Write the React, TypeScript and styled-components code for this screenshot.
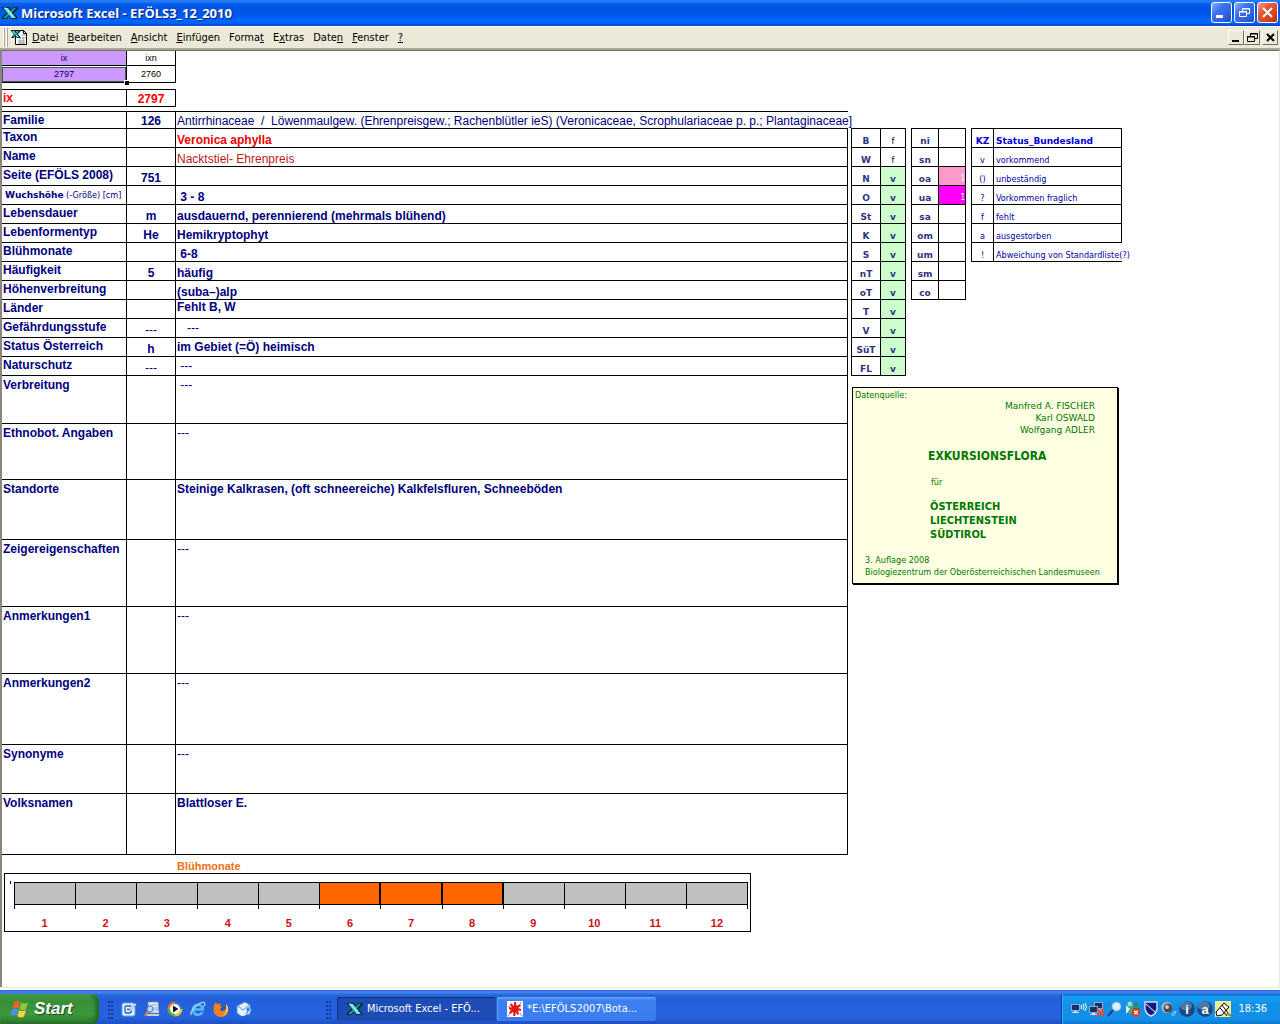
import React from "react";
import styled, { createGlobalStyle, css } from "styled-components";

const tahoma = `Tahoma, "DejaVu Sans Condensed", "DejaVu Sans", sans-serif`;
const arial = `"Liberation Sans", Arial, sans-serif`;

const Global = createGlobalStyle`
  *, *::before, *::after { box-sizing: border-box; }
  body { margin: 0; background: #fff; font-family: ${arial}; }
  button { font: inherit; color: inherit; border: 0; margin: 0; padding: 0; background: none; }
  svg { display: block; flex: none; }
`;

const Desktop = styled.div`
  min-height: 100vh;
  display: flex;
  flex-direction: column;
`;

/* ---------- title bar ---------- */

const TitleBar = styled.header`
  height: 26px;
  display: flex;
  align-items: center;
  padding: 0 2px 1px 2px;
  background: linear-gradient(#1c6cf0 0, #2f87ff 1px, #0d62ee 3px, #0054e3 7px, #0058ee 15px, #0066ff 20px, #0063fa 23px, #0045c8 26px);
`;

const Title = styled.h1`
  flex: 1;
  margin: 0 0 0 3px;
  font: bold 13px/18px "Noto Sans", "Open Sans", sans-serif;
  color: #fff;
  text-shadow: 1px 1px 1px #0a1f83;
  white-space: nowrap;
`;

const CaptionButtons = styled.div`
  display: flex;
  gap: 2px;
`;

const CaptionButton = styled.button<{ $danger?: boolean }>`
  width: 21px;
  height: 21px;
  display: grid;
  place-items: center;
  border: 1px solid #fff;
  border-radius: 3px;
  background: ${(p) =>
    p.$danger
      ? "linear-gradient(135deg, #f0a088 0, #e2593a 35%, #d5401c 75%, #b32c0e)"
      : "linear-gradient(135deg, #8fb0fa 0, #3f72ee 35%, #2a5fe0 75%, #1746c0)"};
`;

/* ---------- menu bar ---------- */

const MenuBar = styled.nav`
  height: 24px;
  display: flex;
  align-items: center;
  padding: 0 2px 0 3px;
  background: #ece9d8;
  border-top: 1px solid #fff;
  border-bottom: 2px solid #aca899;
`;

const MenuGrip = styled.span`
  width: 6px;
  height: 19px;
  margin-right: 2px;
  background: linear-gradient(90deg, #fff 1px, #aca899 1px, #aca899 2px, #ece9d8 2px, #ece9d8 3px, #fff 3px, #fff 4px, #aca899 4px, #aca899 5px, #ece9d8 5px);
`;

const MenuItems = styled.div`
  flex: 1;
  display: flex;
`;

const MenuItem = styled.button`
  padding: 0 5px 0 4px;
  font: 11px/16px ${tahoma};
  color: #000;
  white-space: nowrap;
`;

const DocButtons = styled.div`
  display: flex;
`;

const DocButton = styled.button<{ $apart?: boolean }>`
  width: 16px;
  height: 15px;
  margin-left: ${(p) => (p.$apart ? 2 : 0)}px;
  display: grid;
  place-items: center;
  background: #ece9d8;
  border: 1px solid;
  border-color: #fff #716f64 #716f64 #fff;
`;

/* ---------- worksheet ---------- */

const Sheet = styled.main`
  flex: 1;
  padding-bottom: 54px;
  border: solid #8a887c;
  border-width: 1px 1px 0 2px;
  border-top-color: #716f64;
  border-right-color: #ece9d8;
  background: #fff;
`;

const SheetTable = styled.table`
  border-collapse: separate;
  border-spacing: 0;
  table-layout: fixed;
`;

const KeyTable = styled(SheetTable)`
  width: 174px;
`;

const IndexTable = styled(SheetTable)`
  width: 174px;
  margin: 6px 0 4px;
  border-top: 1px solid #000;
`;

const keyCell = css`
  padding: 0;
  border: solid #000;
  border-width: 0 1px 1px 0;
  font: 9px/14px ${arial};
  text-align: center;
  color: #000;
`;

const KeyHead = styled.th<{ $lilac?: boolean }>`
  ${keyCell}
  height: 15px;
  ${(p) => p.$lilac && "background: #cc99ff; color: #000080;"}
`;

const KeyCell = styled.td<{ $active?: boolean }>`
  ${keyCell}
  height: 17px;
  ${(p) =>
    p.$active &&
    `position: relative;
     background: #cc99ff;
     color: #000080;
     box-shadow: inset 0 1px 0 #fff, inset 0 2px 0 #46584a, inset 0 0 0 1px #46584a;`}
`;

const FillHandle = styled.span`
  position: absolute;
  right: -3px;
  bottom: -3px;
  width: 5px;
  height: 5px;
  background: #000;
  border: 1px solid #fff;
  border-width: 1px 0 0 1px;
`;

const Columns = styled.div`
  display: flex;
  align-items: flex-start;
  gap: 3px;
`;

const RecordTable = styled(SheetTable)`
  flex: 0 0 auto;
  width: 846px;
  border-top: 1px solid #000;
`;

type Align = "top" | "middle" | "bottom";

const recordCell = css`
  padding: 0 1px;
  border: solid #000;
  border-width: 0 1px 1px 0;
  font: bold 12px/14px ${arial};
  color: #000080;
  white-space: pre;
`;

const RecordRow = styled.tr<{ $height: number }>`
  height: ${(p) => p.$height}px;
`;

const Label = styled.th<{ $red?: boolean; $roomy?: boolean }>`
  ${recordCell}
  padding-top: ${(p) => (p.$roomy ? 2 : 1)}px;
  text-align: left;
  vertical-align: top;
  ${(p) => p.$red && "color: #f00;"}
`;

const Code = styled.td<{ $red?: boolean; $light?: boolean }>`
  ${recordCell}
  text-align: center;
  vertical-align: bottom;
  ${(p) => p.$light && "font-weight: normal;"}
  ${(p) => p.$red && "color: #f00;"}
`;

const Value = styled.td<{ $align?: Align; $roomy?: boolean; $color?: string; $light?: boolean; $spill?: boolean }>`
  ${recordCell}
  padding-top: ${(p) => (p.$roomy ? 2 : 0)}px;
  vertical-align: ${(p) => p.$align ?? "bottom"};
  ${(p) => p.$color && `color: ${p.$color};`}
  ${(p) => p.$light && "font-weight: normal;"}
  ${(p) => p.$spill && "border-right: 0;"}
`;

const Heavy = styled.span`
  padding-left: 2px;
  font: bold 9px/14px "DejaVu Sans", sans-serif;
`;

const Slim = styled.span`
  font: 9px/14px "DejaVu Sans Condensed", sans-serif;
`;

/* ---------- side tables ---------- */

const Side = styled.aside`
  padding-top: 17px;
`;

const SideTables = styled.div`
  display: flex;
  align-items: flex-start;
  gap: 5px;
`;

const SideTable = styled(SheetTable)<{ $width: number }>`
  width: ${(p) => p.$width}px;
  border-top: 1px solid #000;
  border-left: 1px solid #000;
`;

const sideCell = css`
  height: 19px;
  padding: 0 2px;
  border: solid #000;
  border-width: 0 1px 1px 0;
  vertical-align: bottom;
  font: 9px/12px "DejaVu Sans Condensed", sans-serif;
  white-space: nowrap;
`;

const sideBold = `font: bold 9px/12px "DejaVu Sans", sans-serif;`;

const Region = styled.th`
  ${sideCell}
  ${sideBold}
  color: #333380;
`;

const Mark = styled.td<{ $present?: boolean; $fill?: string }>`
  ${sideCell}
  text-align: center;
  color: #000;
  ${(p) => p.$present && `${sideBold} background: #ccffcc; color: #333380;`}
  ${(p) => p.$fill && `background: ${p.$fill}; color: #fff; text-align: right; padding-right: 0; font-size: 8px;`}
`;

const StatusHead = styled.th<{ $left?: boolean }>`
  ${sideCell}
  ${sideBold}
  color: #0000d8;
  text-align: ${(p) => (p.$left ? "left" : "center")};
`;

const StatusCell = styled.td<{ $center?: boolean; $spill?: boolean }>`
  ${sideCell}
  color: #0000a8;
  text-align: ${(p) => (p.$center ? "center" : "left")};
  ${(p) => p.$spill && "border-right: 0;"}
`;

/* ---------- source note ---------- */

const Note = styled.section`
  width: 266px;
  margin: 11px 0 0 1px;
  padding: 1px 3px 5px 2px;
  border: 1px solid #000;
  background: #ffffe1;
  box-shadow: 1px 1px 0 #000;
  font: 9px/12px "DejaVu Sans Condensed", sans-serif;
  color: #007800;
  white-space: nowrap;
`;

const NoteLine = styled.p`
  margin: 0;
`;

const Authors = styled(NoteLine)`
  margin-top: -1px;
  padding-right: 19px;
  font-family: "DejaVu Sans", sans-serif;
  text-align: right;
`;

const Work = styled.h2`
  margin: 13px 0 13px 73px;
  font: bold 12px/14px ${tahoma};
`;

const For = styled(NoteLine)`
  padding-left: 76px;
`;

const Places = styled.p`
  margin: 12px 0 12px 75px;
  font: bold 11px/14px ${tahoma};
`;

const Imprint = styled(NoteLine)`
  padding-left: 10px;
`;

/* ---------- flowering months ---------- */

const ChartTitle = styled.h2`
  margin: 0;
  padding: 4px 0 0 175px;
  height: 18px;
  font: bold 11px/14px ${arial};
  color: #f07010;
`;

const Chart = styled.section`
  position: relative;
  width: 747px;
  margin-left: 2px;
  padding: 8px 2px 0 9px;
  border: 1px solid #000;

  &::before {
    content: "";
    position: absolute;
    left: 5px;
    top: 7px;
    width: 1px;
    height: 3px;
    background: #000;
  }
`;

const Months = styled.ol`
  display: grid;
  grid-template-columns: repeat(12, 1fr);
  margin: 0;
  padding: 0 1px 0 0;
  list-style: none;
  height: 49px;
`;

const Bar = styled.span<{ $bloom: boolean }>`
  height: 23px;
  border: 1px solid #000;
  border-right-width: ${(p) => (p.$bloom ? 1 : 0)}px;
  background: ${(p) => (p.$bloom ? "#ff6600" : "#c0c0c0")};
`;

const Tick = styled.span`
  height: 4px;
  margin-bottom: 7px;
  border: solid #000;
  border-width: 0 0 0 1px;
`;

const Month = styled.li`
  display: flex;
  flex-direction: column;
  font: bold 11px/14px ${arial};
  color: #d01018;
  text-align: center;

  &:last-child {
    margin-right: -1px;
  }

  &:last-child ${Bar}, &:last-child ${Tick} {
    border-right-width: 1px;
  }
`;

/* ---------- taskbar ---------- */

const Taskbar = styled.footer`
  height: 37px;
  display: flex;
  align-items: stretch;
  padding-top: 7px;
  background: linear-gradient(#ece9d8 0, #ece9d8 1px, #fff 1px, #fff 3px, #2c68d4 3px, #3d8af0 5px, #2a66dc 8px, #245edb 12px, #2663e0 30px, #1d4fc0 37px);
`;

const StartButton = styled.button`
  width: 99px;
  display: flex;
  align-items: center;
  gap: 4px;
  padding-left: 10px;
  border-radius: 0 8px 8px 0;
  background: linear-gradient(#5aa85a 0, #3f9a3f 3px, #388e38 8px, #3c983c 20px, #2c7a2c 30px);
  box-shadow: inset -3px 0 4px #1e651e, inset 0 1px 1px #7cc47c;
  font: italic bold 17px/24px ${arial};
  color: #fff;
  text-shadow: 1px 1px 1px #1a4a1a;
`;

const Grip = styled.span`
  width: 5px;
  margin: 7px 6px 5px 9px;
  background: radial-gradient(circle at 1px 1px, #123c9c 1px, transparent 1px) 0 0 / 3px 4px;
`;

const QuickLaunch = styled.div`
  width: 198px;
  display: flex;
  align-items: center;
  gap: 7px;
  padding-left: 2px;
`;

const IconButton = styled.button`
  width: 16px;
  height: 16px;
`;

const Tasks = styled.div`
  flex: 1;
  display: flex;
  gap: 1px;
  padding: 3px 0;
`;

const Task = styled.button<{ $active?: boolean }>`
  width: 159px;
  display: flex;
  align-items: center;
  gap: 4px;
  padding: 0 10px;
  border-radius: 2px;
  background: ${(p) => (p.$active ? "#1c4cb4" : "linear-gradient(#5a98fa, #3c80f2 4px, #3a7cf0)")};
  box-shadow: inset 1px 1px 1px ${(p) => (p.$active ? "#10307c" : "#6aa4fc")};
  font: 11px/16px ${tahoma};
  color: #fff;
  white-space: nowrap;
`;

const Tray = styled.div`
  display: flex;
  align-items: center;
  gap: 2px;
  padding: 0 13px 0 9px;
  border-left: 1px solid #0a3a9c;
  background: linear-gradient(#0c68c8 0, #18a0f4 3px, #1290e8 10px, #1290e8 25px, #0c78d0 30px);
  box-shadow: inset 1px 0 0 #30b4f8;
  font: 11px/16px ${tahoma};
  color: #fff;
`;

const Clock = styled.time`
  margin-left: 5px;
`;

/* ---------- icons ---------- */

const ExcelX = () => (
  <svg width="16" height="14" viewBox="0 0 16 14" aria-hidden="true">
    <path d="M0 1h7l2.500 3L12 1h4v2l-4.500 4 4 4.500V13H9L7 10l-2.500 3H0v-2l5-4.500L0 2z" fill="#002c30" />
    <path d="M9.500 6.500 14 2h-2L1 12h3z" fill="#28a8a0" />
    <path d="M1.500 2h4.500l8 10H9.500z" fill="#58dcd4" />
    <path d="M2 2h2l8 10" fill="none" stroke="#d8fffc" strokeWidth=".8" />
  </svg>
);

const WorkbookIcon = () => (
  <svg width="17" height="17" viewBox="0 0 17 17" aria-hidden="true">
    <path d="M4.500 1.500h8l3 3v11h-11z" fill="#fff" stroke="#000" />
    <path d="M12.500 1.500v3h3" fill="none" stroke="#000" />
    <path d="M7 12h7M7 14h7M9 8v7M12 8v7M11 6h4M11 9h4" stroke="#9a9a9a" />
    <path d="M0 1h4l1.500 2L7 1h3v1L7 5l3 4H6L4.500 7 3 9H0l3-4-3-3z" fill="#002c30" />
    <path d="M1 2h2l5 6H6z" fill="#5fe0d8" />
    <path d="M8 2 2 8" stroke="#1c9c94" strokeWidth="1.300" />
  </svg>
);

const MinimizeGlyph = ({ color }: { color: string }) => (
  <svg width="13" height="13" viewBox="0 0 13 13" aria-hidden="true">
    <path d={color === "#fff" ? "M1 10.500h7" : "M2 10h7"} stroke={color} strokeWidth={color === "#fff" ? 3 : 2} />
  </svg>
);

const RestoreGlyph = ({ color }: { color: string }) => (
  <svg width="13" height="13" viewBox="0 0 13 13" fill="none" stroke={color} aria-hidden="true">
    <path d="M4.500 5V2.500h7v5H9M4 3h8" />
    <path d="M1.500 5.500h7v5h-7zM1 6h8" />
  </svg>
);

const CloseGlyph = ({ color }: { color: string }) => (
  <svg width="13" height="13" viewBox="0 0 13 13" aria-hidden="true">
    <path d={color === "#fff" ? "M2 2l9 9M11 2l-9 9" : "M3 3l7 7M10 3l-7 7"} stroke={color} strokeWidth="2" />
  </svg>
);

const WindowsFlag = () => (
  <svg width="20" height="18" viewBox="0 0 20 18" aria-hidden="true">
    <path d="M4 2q3-2 6 0L8.500 8.500q-3-2-6 0z" fill="#f0622c" />
    <path d="M11 2.500q3 2 7 0L16 9q-3 2-6.500 0z" fill="#8cc83c" />
    <path d="M2 9.500q3-2 6 0L6.500 16q-3-2-6 0z" fill="#4a90f0" />
    <path d="M9 10q3 2 7 0l-2 6.500q-3 2-6.500 0z" fill="#fcd040" />
  </svg>
);

const Icon = ({ children }: { children: React.ReactNode }) => (
  <svg width="16" height="16" viewBox="0 0 16 16" aria-hidden="true">
    {children}
  </svg>
);

const ShowDesktopIcon = () => (
  <Icon>
    <rect x="1" y="2" width="13" height="13" rx="2" fill="#e8f4ff" stroke="#5ca4ec" />
    <path d="M10 5H5L4 6v5l1 1h4l2-2M6 8.500h4" stroke="#1c60c0" strokeWidth="1.300" fill="none" />
    <path d="m8 9 6-7 1.500 1.500L9.500 10z" fill="#fff" stroke="#3a6cb8" strokeWidth=".7" />
  </Icon>
);

const SearchPageIcon = () => (
  <Icon>
    <path d="M4 1h10l1 11H5z" fill="#e8f0fc" stroke="#8090b8" strokeWidth=".8" />
    <path d="M6 4h7M8 7h6M8 9h6" stroke="#8aa0d0" />
    <path d="M3 13h12v2H3z" fill="#c8d0e0" />
    <circle cx="6" cy="8" r="3" fill="#b8dcf8" stroke="#6078a8" />
    <path d="m4 10-3 5" stroke="#d88848" strokeWidth="2" />
  </Icon>
);

const MediaIcon = () => (
  <Icon>
    <circle cx="8" cy="8" r="7.500" fill="#2c70d8" />
    <path d="M8 .5A7.500 7.500 0 0 0 .5 8H8z" fill="#f07828" />
    <path d="M.5 8A7.500 7.500 0 0 0 8 15.500V8z" fill="#58b038" />
    <path d="M8 15.500A7.500 7.500 0 0 0 15.500 8H8z" fill="#f0c030" />
    <circle cx="8" cy="8" r="5" fill="#fff" />
    <path d="M6 4.500v7l5.500-3.500z" fill="#101820" />
  </Icon>
);

const BrowserIcon = () => (
  <Icon>
    <path d="M12.500 11A5 5 0 1 1 13 8.500H4" fill="none" stroke="#58b8f8" strokeWidth="2.600" />
    <path d="M1 14Q0 11 5 6t9-4.500q2 1-.5 4" fill="none" stroke="#a8dcfc" strokeWidth="1.200" />
  </Icon>
);

const FirefoxIcon = () => (
  <Icon>
    <circle cx="8.500" cy="7" r="6" fill="#2c5cb8" />
    <path d="M1 4q1-2 2-3 0 2 2 2 2-1 4 0-2 0-2 2l2 1q-2 1-2 3 2 2 5 0 2-2 1-5 3 3 2 7-2 5-7 5Q1 15 .5 9 .5 6 1 4z" fill="#f08020" />
    <path d="M13 3q3 3 2 7-2 4-6 5 4-3 4-6z" fill="#fcc840" />
  </Icon>
);

const MailIcon = () => (
  <Icon>
    <path d="m1 5 8-4 5 3v9l-9 2-4-3z" fill="#e4f2ff" stroke="#4890e0" strokeWidth=".8" />
    <path d="m2 5 5 4 6-5" fill="none" stroke="#4890e0" />
    <path d="M5 14.500q5 0 6-5l-2-.5 3.500-4L15 10l-2-.2q-1 5-8 4.700z" fill="#2c88e8" stroke="#fff" strokeWidth=".6" />
  </Icon>
);

const SplatIcon = () => (
  <Icon>
    <path d="M0 0h16v16H0z" fill="#fff" />
    <path d="M7 1h2l.5 4L13 3l1 2-3 2 3 1v2l-3-.5 1 3.500-2 1-1-3-1 4H6l.5-4L3 13l-1-1 2-3-2-1V6l3 .5L3 4l1-2 3 3z" fill="#e01818" />
    <path d="m1 15 2-3M13 12l2 3M1 5l2 1M13 1l1 2" stroke="#e07070" />
  </Icon>
);

const Monitor = ({ x, y }: { x: number; y: number }) => (
  <g transform={`translate(${x} ${y})`}>
    <path d="M0 0h9v7H0z" fill="#98a8c8" />
    <path d="M1 1h7v5H1z" fill="#16306c" />
    <path d="M1 9h7v-1H6V7H3v1H1z" fill="#d8dce4" />
  </g>
);

const WirelessIcon = () => (
  <Icon>
    <Monitor x={0} y={3} />
    <path d="M10 4q1 2 0 4M12 3q2 3 0 6M14 2q3 4 0 8" stroke="#fff" fill="none" />
  </Icon>
);

const OfflineIcon = () => (
  <Icon>
    <Monitor x={5} y={1} />
    <Monitor x={0} y={5} />
    <path d="m8 8 7 7M15 8l-7 7" stroke="#f04c38" strokeWidth="2.200" />
  </Icon>
);

const MagnifierIcon = () => (
  <Icon>
    <path d="m6 9-5 6" stroke="#203c90" strokeWidth="2" />
    <circle cx="9.500" cy="5.500" r="4.500" fill="#d8f0ff" stroke="#80b0e8" />
  </Icon>
);

const MessengerIcon = () => (
  <Icon>
    <circle cx="5" cy="3" r="2.500" fill="#90dcd8" />
    <circle cx="11" cy="4" r="2.500" fill="#2c8c60" />
    <path d="m1 12 3-7h4l2 8z" fill="#48a870" />
    <path d="M8 7h6l1 4-6 2z" fill="#1c7458" />
    <path d="m1 4 4 4-4 5z" fill="#e0f4f4" />
    <circle cx="11" cy="11.500" r="4.200" fill="#e03c20" />
    <path d="m9.300 9.800 3.400 3.400M12.700 9.800l-3.400 3.400" stroke="#fff" strokeWidth="1.300" />
  </Icon>
);

const ShieldIcon = () => (
  <Icon>
    <path d="M2 1h12v7q-1 5-6 7-5-2-6-7z" fill="#101c80" stroke="#d8dce8" strokeWidth="1.400" />
    <path d="m3 3 9 8" stroke="#fff" />
  </Icon>
);

const SpeakerIcon = () => (
  <Icon>
    <circle cx="6" cy="6.500" r="5.500" fill="#b8bcc4" />
    <circle cx="7" cy="7" r="4.500" fill="#484c54" />
    <circle cx="6" cy="6" r="2" fill="#c8ccd0" />
    <path d="M10 14q3-1 3-4M12 15q3-2 3-5" stroke="#a8d8ff" fill="none" />
  </Icon>
);

const Badge = ({ letter }: { letter: string }) => (
  <Icon>
    <circle cx="8" cy="8" r="7.800" fill="#1c4880" />
    <ellipse cx="7" cy="5" rx="6" ry="4.500" fill="#7098c0" opacity=".6" />
    <text x="8" y="12.500" textAnchor="middle" fontSize="13" fontWeight="bold" fontFamily="Liberation Sans, sans-serif" fill="#fff">
      {letter}
    </text>
  </Icon>
);

const PenIcon = () => (
  <Icon>
    <path d="M0 0h16v16H0z" fill="#f0ec98" />
    <path d="m1 11 8-9 5 4-7 8-5 1z" fill="#fff" stroke="#000" />
    <path d="m7 4 6 8M5 7l7 8" stroke="#000" />
    <path d="m12 12 4 3" stroke="#908020" strokeWidth="2" />
  </Icon>
);

/* ---------- data ---------- */

const menu: [string, string, string][] = [
  ["", "D", "atei"],
  ["", "B", "earbeiten"],
  ["", "A", "nsicht"],
  ["", "E", "infügen"],
  ["Forma", "t", ""],
  ["E", "x", "tras"],
  ["Date", "n", ""],
  ["", "F", "enster"],
  ["", "?", ""],
];

type Row = {
  label: React.ReactNode;
  code?: string;
  value?: string;
  align?: Align;
  height?: number;
  color?: string;
  light?: boolean;
  spill?: boolean;
};

const rows: Row[] = [
  {
    label: "Familie",
    code: "126",
    value: "Antirrhinaceae  /  Löwenmaulgew. (Ehrenpreisgew.; Rachenblütler ieS) (Veronicaceae, Scrophulariaceae p. p.; Plantaginaceae]",
    height: 17,
    light: true,
    spill: true,
  },
  { label: "Taxon", value: "Veronica aphylla", color: "#f00000" },
  { label: "Name", value: "Nacktstiel- Ehrenpreis", color: "#b81c1c", light: true },
  { label: "Seite (EFÖLS 2008)", code: "751" },
  {
    label: (
      <>
        <Heavy>Wuchshöhe</Heavy>
        <Slim> (-Größe) [cm]</Slim>
      </>
    ),
    value: " 3 - 8",
  },
  { label: "Lebensdauer", code: "m", value: "ausdauernd, perennierend (mehrmals blühend)" },
  { label: "Lebenformentyp", code: "He", value: "Hemikryptophyt" },
  { label: "Blühmonate", value: " 6-8" },
  { label: "Häufigkeit", code: "5", value: "häufig" },
  { label: "Höhenverbreitung", value: "(suba–)alp" },
  { label: "Länder", value: "Fehlt B, W", align: "top" },
  { label: "Gefährdungsstufe", code: "---", value: "   ---", align: "middle" },
  { label: "Status Österreich", code: "h", value: "im Gebiet (=Ö) heimisch", align: "middle" },
  { label: "Naturschutz", code: "---", value: " ---", align: "middle" },
  { label: "Verbreitung", value: " ---", height: 48 },
  { label: "Ethnobot. Angaben", value: "---", height: 56 },
  { label: "Standorte", value: "Steinige Kalkrasen, (oft schneereiche) Kalkfelsfluren, Schneeböden", height: 60 },
  { label: "Zeigereigenschaften", value: "---", height: 67 },
  { label: "Anmerkungen1", value: "---", height: 67 },
  { label: "Anmerkungen2", value: "---", height: 71 },
  { label: "Synonyme", value: "---", height: 49 },
  { label: "Volksnamen", value: "Blattloser E.", height: 61 },
];

const isEmpty = (text?: string) => text?.trim() === "---";

const regions = ["B", "W", "N", "O", "St", "K", "S", "nT", "oT", "T", "V", "SüT", "FL"];
const absent = ["B", "W"];

const zones: [string, string?][] = [
  ["ni"], ["sn"], ["oa", "#ff99cc"], ["ua", "#ff00ff"], ["sa"], ["om"], ["um"], ["sm"], ["co"],
];

const statuses = [
  ["v", "vorkommend"],
  ["()", "unbeständig"],
  ["?", "Vorkommen fraglich"],
  ["f", "fehlt"],
  ["a", "ausgestorben"],
  ["!", "Abweichung von Standardliste(?)"],
];

const months = Array.from({ length: 12 }, (_, i) => i + 1);

const launchers: [string, () => React.JSX.Element][] = [
  ["Desktop anzeigen", ShowDesktopIcon],
  ["Suchen", SearchPageIcon],
  ["Media Player", MediaIcon],
  ["Internet Explorer", BrowserIcon],
  ["Firefox", FirefoxIcon],
  ["E-Mail", MailIcon],
];

export default function App() {
  return (
    <Desktop>
      <Global />
      <TitleBar>
        <ExcelX />
        <Title>Microsoft Excel - EFÖLS3_12_2010</Title>
        <CaptionButtons>
          <CaptionButton aria-label="Minimieren"><MinimizeGlyph color="#fff" /></CaptionButton>
          <CaptionButton aria-label="Wiederherstellen"><RestoreGlyph color="#fff" /></CaptionButton>
          <CaptionButton $danger aria-label="Schließen"><CloseGlyph color="#fff" /></CaptionButton>
        </CaptionButtons>
      </TitleBar>
      <MenuBar>
        <MenuGrip />
        <WorkbookIcon />
        <MenuItems>
          {menu.map(([before, key, after]) => (
            <MenuItem key={before + key + after}>{before}<u>{key}</u>{after}</MenuItem>
          ))}
        </MenuItems>
        <DocButtons>
          <DocButton aria-label="Mappe minimieren"><MinimizeGlyph color="#000" /></DocButton>
          <DocButton aria-label="Mappe wiederherstellen"><RestoreGlyph color="#000" /></DocButton>
          <DocButton $apart aria-label="Mappe schließen"><CloseGlyph color="#000" /></DocButton>
        </DocButtons>
      </MenuBar>

      <Sheet>
        <KeyTable>
          <colgroup><col width={125} /><col width={49} /></colgroup>
          <tbody>
            <tr><KeyHead $lilac>ix</KeyHead><KeyHead>ixn</KeyHead></tr>
            <tr><KeyCell $active>2797<FillHandle /></KeyCell><KeyCell>2760</KeyCell></tr>
          </tbody>
        </KeyTable>
        <IndexTable>
          <colgroup><col width={125} /><col width={49} /></colgroup>
          <tbody>
            <RecordRow $height={17}><Label $red scope="row">ix</Label><Code $red>2797</Code></RecordRow>
          </tbody>
        </IndexTable>

        <Columns>
          <RecordTable>
            <colgroup><col width={125} /><col width={49} /><col /></colgroup>
            <tbody>
              {rows.map((r, i) => {
                const tall = (r.height ?? 19) > 19;
                return (
                  <RecordRow key={i} $height={r.height ?? 19}>
                    <Label scope="row" $roomy={tall}>{r.label}</Label>
                    <Code $light={isEmpty(r.code)}>{r.code}</Code>
                    <Value
                      $align={tall ? "top" : r.align}
                      $roomy={tall}
                      $color={r.color}
                      $light={r.light || isEmpty(r.value)}
                      $spill={r.spill}
                    >
                      {r.value}
                    </Value>
                  </RecordRow>
                );
              })}
            </tbody>
          </RecordTable>

          <Side>
            <SideTables>
              <SideTable $width={55}>
                <colgroup><col width={29} /><col width={25} /></colgroup>
                <tbody>
                  {regions.map((r) => (
                    <tr key={r}>
                      <Region scope="row">{r}</Region>
                      <Mark $present={!absent.includes(r)}>{absent.includes(r) ? "f" : "v"}</Mark>
                    </tr>
                  ))}
                </tbody>
              </SideTable>
              <SideTable $width={55}>
                <colgroup><col width={27} /><col width={27} /></colgroup>
                <tbody>
                  {zones.map(([zone, fill]) => (
                    <tr key={zone}>
                      <Region scope="row">{zone}</Region>
                      <Mark $fill={fill}>{fill ? "1" : ""}</Mark>
                    </tr>
                  ))}
                </tbody>
              </SideTable>
              <SideTable $width={151}>
                <colgroup><col width={22} /><col width={128} /></colgroup>
                <thead>
                  <tr><StatusHead>KZ</StatusHead><StatusHead $left>Status_Bundesland</StatusHead></tr>
                </thead>
                <tbody>
                  {statuses.map(([sign, meaning]) => (
                    <tr key={sign}>
                      <StatusCell $center>{sign}</StatusCell>
                      <StatusCell $spill={sign === "!"}>{meaning}</StatusCell>
                    </tr>
                  ))}
                </tbody>
              </SideTable>
            </SideTables>
            <Note>
              <NoteLine>Datenquelle:</NoteLine>
              <Authors>Manfred A. FISCHER<br />Karl OSWALD<br />Wolfgang ADLER</Authors>
              <Work>EXKURSIONSFLORA</Work>
              <For>für</For>
              <Places>ÖSTERREICH<br />LIECHTENSTEIN<br />SÜDTIROL</Places>
              <Imprint>3. Auflage 2008<br />Biologiezentrum der Oberösterreichischen Landesmuseen</Imprint>
            </Note>
          </Side>
        </Columns>

        <ChartTitle>Blühmonate</ChartTitle>
        <Chart>
          <Months>
            {months.map((m) => (
              <Month key={m}>
                <Bar $bloom={m >= 6 && m <= 8} />
                <Tick />
                {m}
              </Month>
            ))}
          </Months>
        </Chart>
      </Sheet>

      <Taskbar>
        <StartButton><WindowsFlag />Start</StartButton>
        <Grip />
        <QuickLaunch>
          {launchers.map(([name, Glyph]) => (
            <IconButton key={name} aria-label={name}><Glyph /></IconButton>
          ))}
        </QuickLaunch>
        <Grip />
        <Tasks>
          <Task $active><ExcelX />Microsoft Excel - EFÖ...</Task>
          <Task><SplatIcon />*E:\EFÖLS2007\Bota...</Task>
        </Tasks>
        <Tray>
          <WirelessIcon />
          <OfflineIcon />
          <MagnifierIcon />
          <MessengerIcon />
          <ShieldIcon />
          <SpeakerIcon />
          <Badge letter="i" />
          <Badge letter="a" />
          <PenIcon />
          <Clock>18:36</Clock>
        </Tray>
      </Taskbar>
    </Desktop>
  );
}
